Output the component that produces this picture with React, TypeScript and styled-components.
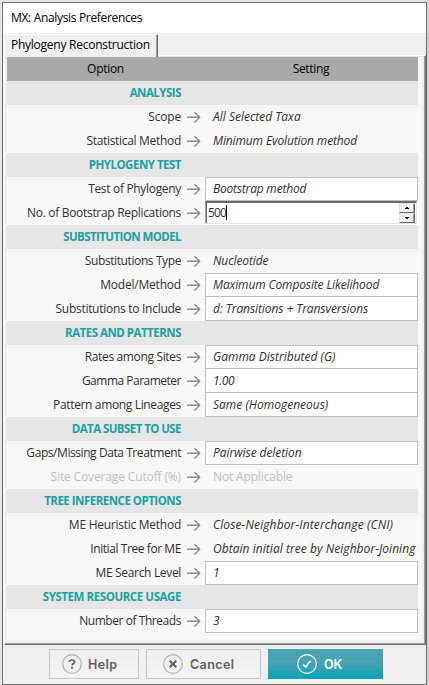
import React from "react";
import styled, { createGlobalStyle, css } from "styled-components";

const Global = createGlobalStyle`
  * { box-sizing: border-box; }
  body { margin: 0; background: #e3e3e3; overflow: hidden; }
`;

const Desktop = styled.div`
  width: 429px;
  height: 685px;
  padding: 2px 2px 0;
  background: linear-gradient(90deg, #e6e6e6 0 2px, #e3e3e3 2px 427px, #c9c9c9 427px, #dedede 429px);
  font: 12px/24px "Open Sans", "Noto Sans", sans-serif;
  color: #303030;
`;

const Window = styled.div`
  width: 425px;
  height: 683px;
  border: 1px solid #6e6e6e;
  background: #f0f0f0;
  display: flex;
  flex-direction: column;
`;

const Fit = styled.span<{ $ls?: number }>`
  letter-spacing: ${(p) => p.$ls ?? 0}px;
  white-space: pre;
`;

const TitleBar = styled.div`
  height: 30px;
  flex: none;
  padding-left: 8px;
  line-height: 30px;
  background: #fff;
  color: #000;
`;

const TabStrip = styled.div`
  height: 22px;
  flex: none;
  display: flex;
  align-items: flex-start;
  padding: 1px 0 0 1px;
`;

const Tab = styled.div`
  width: 154px;
  height: 23px;
  flex: none;
  z-index: 1;
  padding-left: 6px;
  line-height: 20px;
  color: #000;
  background: #f0f0f0;
  border: solid #fff;
  border-width: 1px 1px 0 1px;
  border-right-color: #696969;
  box-shadow: inset -1px 0 0 #a0a0a0;
  border-top-left-radius: 2px;
  position: relative;
`;

const Panel = styled.div`
  height: 590px;
  flex: none;
  margin-left: 1px;
  border: 1px solid #6e6e6e;
  border-top-color: #fff;
  border-left-color: #fff;
  box-shadow: inset -1px -1px 0 #a0a0a0, inset 0 1px 0 #e3e3e3;
  padding: 1px 6px 0 2px;
`;

const Grid = styled.div`
  width: 415px;
  height: 584px;
  background: #f8f8f6;
`;

const Header = styled.div`
  width: 411px;
  height: 24px;
  display: grid;
  grid-template-columns: 197px 214px;
  background: #a9a9a9;
  color: #000;
  text-align: center;
  line-height: 24px;
`;

const Section = styled.div`
  width: 411px;
  height: 24px;
  padding-right: 237px;
  text-align: right;
  white-space: nowrap;
  background: #e6e6e6;
  color: #21a0a0;
  font-size: 11.5px;
  font-weight: 700;
`;

const Row = styled.div<{ $off?: boolean }>`
  width: 411px;
  height: 24px;
  display: grid;
  grid-template-columns: 174px 24px 213px;
  grid-template-rows: 24px;
  color: ${(p) => (p.$off ? "#c0c0c0" : "#303030")};
`;

const Label = styled.div`
  text-align: right;
  white-space: nowrap;
`;

const ArrowCell = styled.div`
  padding: 5px 0 0 6px;
  line-height: 0;
`;

const Value = styled.div<{ $box?: boolean; $first?: boolean; $off?: boolean }>`
  padding-left: ${(p) => (p.$box ? 7 : 8)}px;
  font-style: ${(p) => (p.$off ? "normal" : "italic")};
  white-space: nowrap;
  ${(p) =>
    p.$box &&
    css`
      height: 24px;
      background: #fff;
      border: 1px solid #c0c0c0;
      border-top-width: ${p.$first ? 1 : 0}px;
      line-height: ${p.$first ? 22 : 24}px;
    `}
`;

const SpinEdit = styled.div`
  height: 23px;
  width: 212px;
  display: flex;
  justify-content: space-between;
  background: #fff;
  border: solid;
  border-width: 2px 1px 1px 1px;
  border-color: #6c6c6c #e3e3e3 #e3e3e3 #a0a0a0;
  box-shadow: inset 1px 0 0 #696969, 0 1px 0 #fff;
  line-height: 17px;
  padding-left: 2px;
`;

const Typed = styled.div`
  display: flex;
  align-items: center;
  height: 18px;
`;

const Caret = styled.i`
  width: 1px;
  height: 15px;
  background: #000;
`;

const SpinButtons = styled.div`
  width: 16px;
  height: 20px;
  margin-right: 1px;
  display: grid;
  grid-template-rows: 10px 10px;
`;

const SpinButton = styled.div`
  display: flex;
  align-items: center;
  justify-content: center;
  background: #f0f0f0;
  border: 1px solid;
  border-color: #e3e3e3 #696969 #696969 #e3e3e3;
  box-shadow: inset -1px 0 0 #a0a0a0;
`;

const Footer = styled.div`
  flex: 1;
  display: flex;
  gap: 7px;
  padding: 4px 0 0 46px;
`;

const Button = styled.button<{ $w: number; $primary?: boolean; $pad: number; $gap: number }>`
  width: ${(p) => p.$w}px;
  height: 30px;
  display: flex;
  align-items: center;
  gap: ${(p) => p.$gap}px;
  margin: 0;
  padding: 0 0 0 ${(p) => p.$pad}px;
  border: ${(p) => (p.$primary ? "0" : "1px solid #c6c6c6")};
  background: ${(p) =>
    p.$primary ? "linear-gradient(#4ba3b4 0%, #48a3b3 45%, #08a3b5 100%)" : "linear-gradient(#eeeeee, #f3f3f3)"};
  color: ${(p) => (p.$primary ? "#fff" : "#606060")};
  font: 600 12.5px "Inter", sans-serif;
`;

const Arrow = () => (
  <svg width="14" height="14" viewBox="0 0 14 14" fill="none" stroke="#8c8c8c" strokeWidth="1.4">
    <path d="M0 7.3H12.5M7.5 2.2L12.7 7.3L7.5 12.4" />
  </svg>
);

const Circle = ({ kind }: { kind: "help" | "cancel" | "ok" }) => (
  <svg width="20" height="20" viewBox="0 0 20 20" fill="none">
    <circle cx="10" cy="10" r="9.3" stroke={kind === "ok" ? "#fff" : "#b2b2b2"} strokeWidth="1.2" />
    {kind === "ok" && <path d="M6.3 10.6L8.8 13L13.4 6.8" stroke="#fff" strokeWidth="1.7" />}
    {kind === "cancel" && <path d="M6.7 6.7L13.3 13.3M13.3 6.7L6.7 13.3" stroke="#606060" strokeWidth="2" />}
    {kind === "help" && (
      <>
        <path d="M7.2 7.7C7.5 6.5 8.6 6 9.9 6C11.6 6 12.6 6.8 12.6 8C12.6 9.5 10.1 9.6 10.1 11.6" stroke="#606060" strokeWidth="1.7" />
        <path d="M9.1 12.8H11.1V14.7H9.1Z" fill="#606060" />
      </>
    )}
  </svg>
);

type Item = {
  section?: string;
  label?: string;
  value?: string;
  box?: boolean;
  first?: boolean;
  off?: boolean;
  spin?: boolean;
  ls?: number;
  vs?: number;
};

const items: Item[] = [
  { section: "ANALYSIS", ls: -0.5 },
  { label: "Scope", value: "All Selected Taxa", ls: -0.2 },
  { label: "Statistical Method", value: "Minimum Evolution method", ls: -0.31, vs: -0.13 },
  { section: "PHYLOGENY TEST", ls: -0.5 },
  { label: "Test of Phylogeny", value: "Bootstrap method", box: true, first: true, ls: -0.32, vs: -0.2 },
  { label: "No. of Bootstrap Replications", value: "500", spin: true, ls: -0.31, vs: -0.8 },
  { section: "SUBSTITUTION MODEL", ls: -0.58 },
  { label: "Substitutions Type", value: "Nucleotide", ls: -0.4, vs: -0.1 },
  { label: "Model/Method", value: "Maximum Composite Likelihood", box: true, first: true, ls: -0.2, vs: -0.13 },
  { label: "Substitutions to Include", value: "d: Transitions + Transversions", box: true, ls: -0.28, vs: -0.08 },
  { section: "RATES AND PATTERNS", ls: -0.5 },
  { label: "Rates among Sites", value: "Gamma Distributed (G)", box: true, first: true, ls: -0.35 },
  { label: "Gamma Parameter", value: "1.00", box: true, ls: -0.5, vs: -0.4 },
  { label: "Pattern among Lineages", value: "Same (Homogeneous)", box: true, ls: -0.35 },
  { section: "DATA SUBSET TO USE", ls: -0.57 },
  { label: "Gaps/Missing Data Treatment", value: "Pairwise deletion", box: true, first: true, ls: -0.43, vs: -0.07 },
  { label: "Site Coverage Cutoff (%)", value: "Not Applicable", off: true, ls: -0.14, vs: -0.15 },
  { section: "TREE INFERENCE OPTIONS", ls: -0.5 },
  { label: "ME Heuristic Method", value: "Close-Neighbor-Interchange (CNI)", ls: -0.26, vs: 0.12 },
  { label: "Initial Tree for ME", value: "Obtain initial tree by Neighbor-Joining", ls: -0.42, vs: 0.05 },
  { label: "ME Search Level", value: "1", box: true, first: true, ls: -0.33 },
  { section: "SYSTEM RESOURCE USAGE", ls: -0.42 },
  { label: "Number of Threads", value: "3", box: true, first: true, ls: -0.44 },
];

export default function App() {
  return (
    <Desktop>
      <Global />
      <Window>
        <TitleBar>
          <Fit $ls={-0.33}>MX: Analysis Preferences</Fit>
        </TitleBar>
        <TabStrip>
          <Tab>
            <Fit $ls={-0.25}>Phylogeny Reconstruction</Fit>
          </Tab>
        </TabStrip>
        <Panel>
          <Grid>
            <Header>
              <Fit $ls={-0.3}>Option</Fit>
              <Fit $ls={-0.3}>Setting</Fit>
            </Header>
            {items.map((it) =>
              it.section ? (
                <Section key={it.section}>
                  <Fit $ls={it.ls}>{it.section}</Fit>
                </Section>
              ) : (
                <Row key={it.label} $off={it.off}>
                  <Label>
                    <Fit $ls={it.ls}>{it.label}</Fit>
                  </Label>
                  <ArrowCell>
                    <Arrow />
                  </ArrowCell>
                  {it.spin ? (
                    <SpinEdit>
                      <Typed>
                        <Fit $ls={it.vs}>{it.value}</Fit>
                        <Caret />
                      </Typed>
                      <SpinButtons>
                        <SpinButton>
                          <svg width="4" height="2"><path d="M1 0H3V1H4V2H0V1H1Z" fill="#000" /></svg>
                        </SpinButton>
                        <SpinButton>
                          <svg width="4" height="2"><path d="M0 0H4V1H3V2H1V1H0Z" fill="#000" /></svg>
                        </SpinButton>
                      </SpinButtons>
                    </SpinEdit>
                  ) : (
                    <Value $box={it.box} $first={it.first} $off={it.off}>
                      <Fit $ls={it.vs}>{it.value}</Fit>
                    </Value>
                  )}
                </Row>
              )
            )}
          </Grid>
        </Panel>
        <Footer>
          <Button $w={90} $pad={12} $gap={6}>
            <Circle kind="help" />
            <Fit $ls={0.4}>Help</Fit>
          </Button>
          <Button $w={115} $pad={16} $gap={7}>
            <Circle kind="cancel" />
            <Fit $ls={0.4}>Cancel</Fit>
          </Button>
          <Button $w={115} $pad={29} $gap={7} $primary>
            <Circle kind="ok" />
            <Fit>OK</Fit>
          </Button>
        </Footer>
      </Window>
    </Desktop>
  );
}
